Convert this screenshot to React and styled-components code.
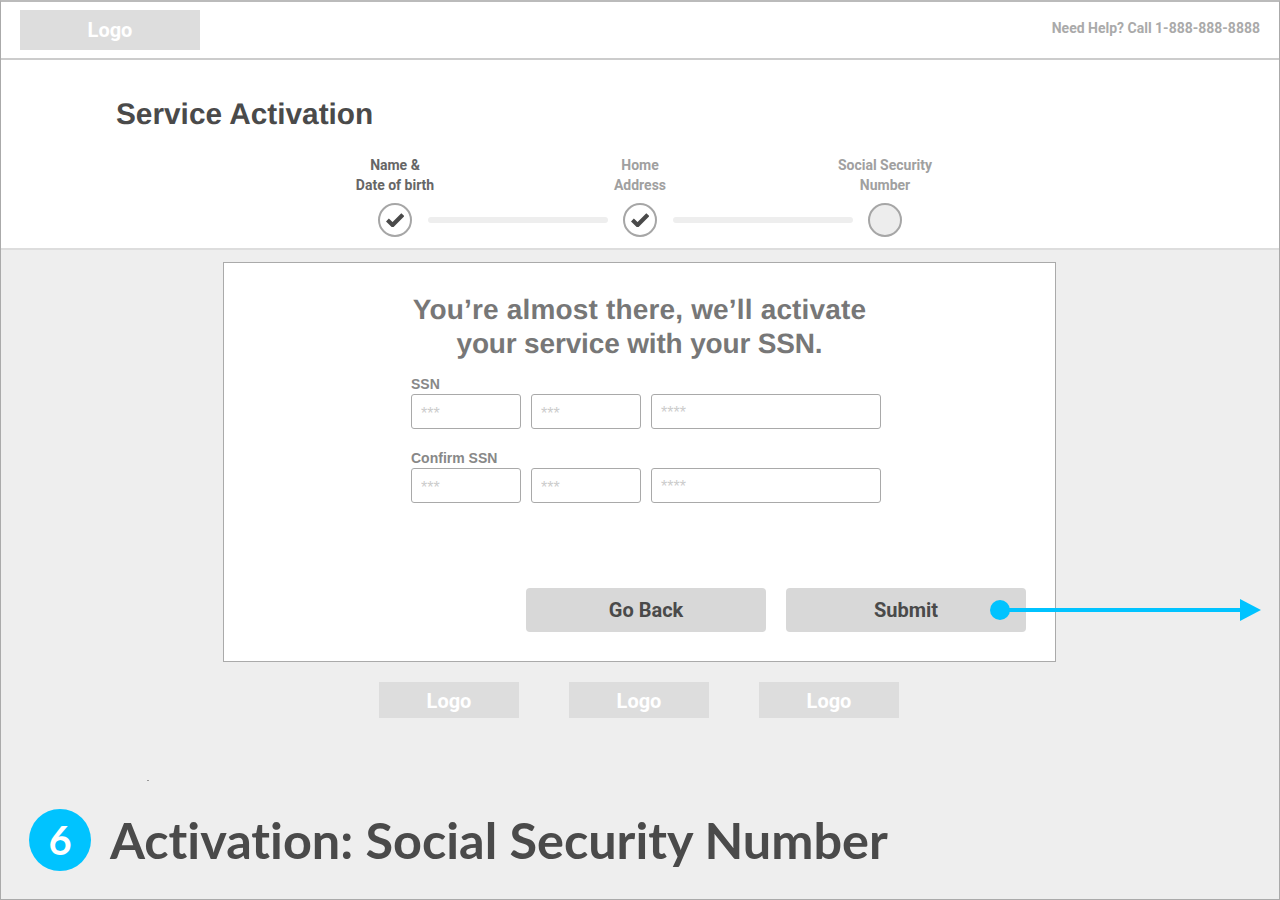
import React from 'react';
import styled, { createGlobalStyle } from 'styled-components';

const GlobalStyle = createGlobalStyle`
  html, body {
    margin: 0;
    padding: 0;
    background: #eee;
    font-family: Roboto, "Liberation Sans", sans-serif;
  }
  * { box-sizing: border-box; }
`;

const Frame = styled.div`
  width: 1280px;
  height: 900px;
  display: flex;
  flex-direction: column;
  position: relative;
  overflow: hidden;
  background: #eee;
  border: 1px solid #aaa;
  border-top: 2px solid #bbb;
`;

const Header = styled.header`
  height: 58px;
  flex: none;
  display: flex;
  align-items: center;
  justify-content: space-between;
  padding: 0 19px;
  background: #fff;
  border-bottom: 2px solid #ccc;
`;

const LogoBox = styled.div`
  width: ${(p) => p.$w}px;
  height: ${(p) => p.$h}px;
  padding-top: ${(p) => (p.$small ? '1px' : '0')};
  display: flex;
  align-items: center;
  justify-content: center;
  background: #ddd;
  color: #fff;
  font-size: 20px;
  font-weight: 700;
`;

const Help = styled.div`
  font-size: 14px;
  font-weight: 700;
  color: #aaa;
  margin-top: -4px;
`;

const TitleBand = styled.section`
  height: 190px;
  flex: none;
  background: #fff;
  border-bottom: 2px solid #ddd;
  padding-top: 36px;
`;

const PageTitle = styled.h1`
  margin: 0 0 0 115px;
  font-family: "Liberation Sans", Arial, sans-serif;
  font-size: 29.8px;
  line-height: 38px;
  font-weight: 700;
  color: #4a4a4a;
  text-rendering: geometricPrecision;
`;

const StepLabels = styled.div`
  display: grid;
  grid-template-columns: repeat(3, 245px);
  justify-content: center;
  margin-top: 21px;
`;

const StepLabel = styled.div`
  text-align: center;
  font-size: 14px;
  line-height: 20px;
  font-weight: 700;
  color: ${(p) => (p.$active ? '#666' : '#a0a0a0')};
`;

const Stepper = styled.div`
  display: flex;
  align-items: center;
  justify-content: center;
  gap: 15.5px;
  margin-top: 8px;
`;

const StepDot = styled.div`
  width: 34px;
  height: 34px;
  border-radius: 50%;
  display: flex;
  align-items: center;
  justify-content: center;
  border: 2px solid #a6a6a6;
  background: ${(p) => (p.$done ? '#fff' : '#ededed')};
`;

const StepBar = styled.div`
  width: 180px;
  height: 6px;
  border-radius: 3px;
  background: #eee;
`;

const Main = styled.main`
  flex: 1;
  display: flex;
  flex-direction: column;
  align-items: center;
`;

const Card = styled.div`
  width: 833px;
  height: 400px;
  margin: 12px 0 0 -1px;
  padding-top: 30px;
  background: #fff;
  border: 1px solid #aaa;
  display: flex;
  flex-direction: column;
  align-items: center;
`;

const Heading = styled.h2`
  margin: 0;
  text-align: center;
  font-family: "Liberation Sans", Arial, sans-serif;
  font-size: 28px;
  line-height: 34px;
  font-weight: 700;
  color: #777;
  text-rendering: geometricPrecision;
`;

const HeadingLine = styled.div`
  letter-spacing: ${(p) => p.$track}px;
`;

const Form = styled.div`
  width: 470px;
  margin: 16px 0 0 13px;
  display: flex;
  flex-direction: column;
  gap: 22px;
`;

const FieldLabel = styled.div`
  font-family: "Liberation Sans", Arial, sans-serif;
  font-size: 14px;
  line-height: 15px;
  font-weight: 700;
  color: #888;
  margin-bottom: 2px;
`;

const InputRow = styled.div`
  display: grid;
  grid-template-columns: 110px 110px 230px;
  gap: 10px;
`;

const SsnInput = styled.input`
  height: 35px;
  min-width: 0;
  width: 100%;
  padding: ${(p) => (p.$long ? '2px 9px 0' : '4px 9px 0')};
  background: #fff;
  border: 1px solid #a9a9a9;
  border-radius: 3px;
  font-family: "Liberation Sans", Arial, sans-serif;
  font-size: 16px;
  &::placeholder { color: #ccc; opacity: 1; }
`;

const Actions = styled.div`
  display: flex;
  justify-content: flex-end;
  gap: 20px;
  width: 100%;
  margin-top: auto;
  padding: 0 29px 29px 0;
`;

const ActionButton = styled.button`
  width: 240px;
  height: 44px;
  position: relative;
  border: 0;
  border-radius: 4px;
  background: #d8d8d8;
  color: #4a4a4a;
  font-family: Roboto, sans-serif;
  font-size: 20px;
  font-weight: 700;
  padding: 0;
`;

const FlowArrow = styled.svg`
  position: absolute;
  left: 204px;
  top: 11px;
  overflow: visible;
`;

const PartnerLogos = styled.div`
  display: flex;
  gap: 50px;
  margin: 20px 0 0 -2px;
`;

const Caption = styled.div`
  display: flex;
  align-items: center;
  gap: 19px;
  padding: 0 0 28px 28px;
`;

const NumberBadge = styled.div`
  width: 62px;
  height: 62px;
  border-radius: 50%;
  display: flex;
  align-items: center;
  justify-content: center;
  background: #00c3ff;
  color: #fff;
  font-family: Lato, sans-serif;
  font-size: 40px;
  font-weight: 700;
`;

const CaptionText = styled.div`
  font-family: Lato, sans-serif;
  font-size: 50.4px;
  line-height: 62px;
  font-weight: 700;
  color: #4a4a4a;
  font-variant-ligatures: none;
`;

const Speck = styled.div`
  position: absolute;
  left: 146px;
  top: 778px;
  width: 2px;
  height: 1px;
  background: #999;
`;

const steps = [
  { lines: ['Name &', 'Date of birth'], active: true },
  { lines: ['Home', 'Address'] },
  { lines: ['Social Security', 'Number'] },
];

const CheckMark = () => (
  <svg width="18" height="14" viewBox="0 0 18 14">
    <path d="M1.4 7 L6.6 12 L16.8 1.6" fill="none" stroke="#4a4a4a" strokeWidth="4.2" />
  </svg>
);

const SsnRow = ({ label }) => (
  <div>
    <FieldLabel>{label}</FieldLabel>
    <InputRow>
      <SsnInput placeholder="***" />
      <SsnInput placeholder="***" />
      <SsnInput $long placeholder="****" />
    </InputRow>
  </div>
);

export default function App() {
  return (
    <Frame>
      <GlobalStyle />
      <Header>
        <LogoBox $w={180} $h={40}>Logo</LogoBox>
        <Help>Need Help? Call 1-888-888-8888</Help>
      </Header>
      <TitleBand>
        <PageTitle>Service Activation</PageTitle>
        <StepLabels>
          {steps.map((s) => (
            <StepLabel key={s.lines[0]} $active={s.active}>
              {s.lines[0]}
              <br />
              {s.lines[1]}
            </StepLabel>
          ))}
        </StepLabels>
        <Stepper>
          <StepDot $done><CheckMark /></StepDot>
          <StepBar />
          <StepDot $done><CheckMark /></StepDot>
          <StepBar />
          <StepDot />
        </Stepper>
      </TitleBand>
      <Main>
        <Card>
          <Heading>
            <HeadingLine $track={0.17}>You’re almost there, we’ll activate</HeadingLine>
            <HeadingLine $track={-0.16}>your service with your SSN.</HeadingLine>
          </Heading>
          <Form>
            <SsnRow label="SSN" />
            <SsnRow label="Confirm SSN" />
          </Form>
          <Actions>
            <ActionButton>Go Back</ActionButton>
            <ActionButton>
              Submit
              <FlowArrow width="272" height="22" viewBox="0 0 272 22">
                <circle cx="10" cy="11" r="10" fill="#00c3ff" />
                <rect x="10" y="9" width="242" height="4" fill="#00c3ff" />
                <path d="M250 0 L271 11 L250 22 Z" fill="#00c3ff" />
              </FlowArrow>
            </ActionButton>
          </Actions>
        </Card>
        <PartnerLogos>
          <LogoBox $small $w={140} $h={36}>Logo</LogoBox>
          <LogoBox $small $w={140} $h={36}>Logo</LogoBox>
          <LogoBox $small $w={140} $h={36}>Logo</LogoBox>
        </PartnerLogos>
      </Main>
      <Speck />
      <Caption>
        <NumberBadge>6</NumberBadge>
        <CaptionText>Activation: Social Security Number</CaptionText>
      </Caption>
    </Frame>
  );
}
